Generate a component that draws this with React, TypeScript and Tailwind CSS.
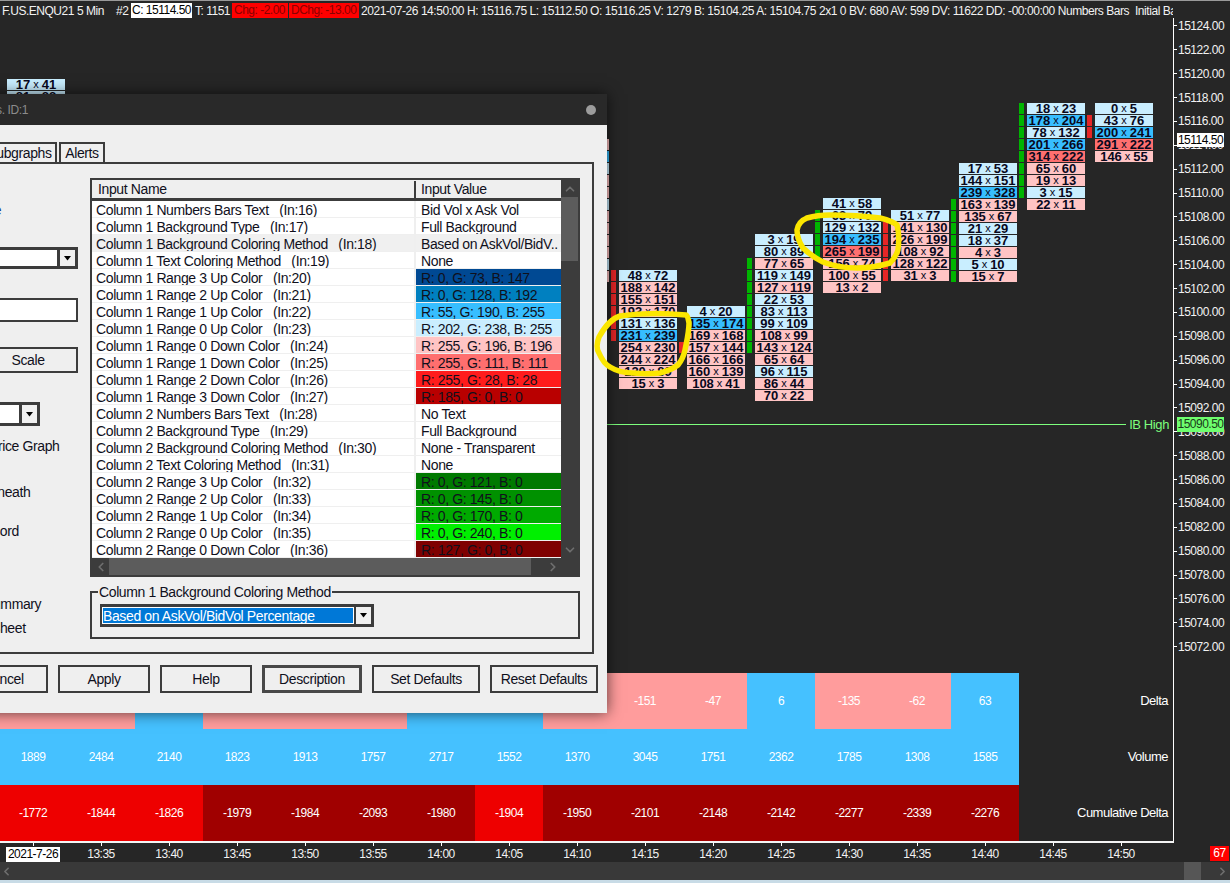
import React from "react";
import { ChevronDown, ChevronLeft, ChevronRight, ChevronUp } from "lucide-react";

type Shade = "L" | "B" | "P" | "R";
type Cell = [number | null, number | null, Shade];

type FootprintColumn = {
  x: number;
  top: number;
  bar?: { color: "green" | "red"; from: number; to: number };
  rows: Cell[];
};

const shadeClass: Record<Shade, string> = {
  L: "bg-[#c9eeff]",
  B: "bg-[#37beff]",
  P: "bg-[#ffc4c4]",
  R: "bg-[#ff6f6f]",
};

const blank = (s: Shade): Cell => [null, null, s];

const columns: FootprintColumn[] = [
  { x: 7, top: 79, rows: [[17, 41, "L"], [81, 88, "L"]] },
  {
    x: 551,
    top: 139,
    rows: [blank("P"), blank("B"), blank("L"), blank("P"), blank("P"), blank("L"), blank("P"), blank("P"), blank("P"), blank("P"), blank("L"), blank("P")],
  },
  {
    x: 619,
    top: 270,
    bar: { color: "red", from: 0, to: 5 },
    rows: [[48, 72, "L"], [188, 142, "P"], [155, 151, "P"], [193, 170, "P"], [131, 136, "L"], [231, 239, "B"], [254, 230, "P"], [244, 224, "P"], [120, 89, "P"], [15, 3, "P"]],
  },
  {
    x: 687,
    top: 306,
    bar: { color: "red", from: 3, to: 3 },
    rows: [[4, 20, "L"], [135, 174, "B"], [169, 168, "P"], [157, 144, "P"], [166, 166, "P"], [160, 139, "P"], [108, 41, "P"]],
  },
  {
    x: 755,
    top: 234,
    bar: { color: "green", from: 2, to: 9 },
    rows: [[3, 19, "L"], [80, 89, "L"], [77, 65, "P"], [119, 149, "L"], [127, 119, "P"], [22, 53, "L"], [83, 113, "L"], [99, 109, "L"], [108, 99, "P"], [143, 124, "P"], [65, 64, "P"], [96, 115, "L"], [86, 44, "P"], [70, 22, "P"]],
  },
  {
    x: 823,
    top: 198,
    bar: { color: "green", from: 1, to: 4 },
    rows: [[41, 58, "L"], [63, 79, "L"], [129, 132, "L"], [194, 235, "B"], [265, 199, "R"], [156, 74, "P"], [100, 55, "P"], [13, 2, "P"]],
  },
  {
    x: 891,
    top: 210,
    bar: { color: "red", from: 1, to: 5 },
    rows: [[51, 77, "L"], [141, 130, "P"], [226, 199, "P"], [108, 92, "P"], [128, 122, "P"], [31, 3, "P"]],
  },
  {
    x: 959,
    top: 163,
    bar: { color: "green", from: 3, to: 9 },
    rows: [[17, 53, "L"], [144, 151, "L"], [239, 328, "B"], [163, 139, "P"], [135, 67, "P"], [21, 29, "L"], [18, 37, "L"], [4, 3, "P"], [5, 10, "L"], [15, 7, "P"]],
  },
  {
    x: 1027,
    top: 103,
    bar: { color: "green", from: 0, to: 7 },
    rows: [[18, 23, "L"], [178, 204, "B"], [78, 132, "L"], [201, 266, "B"], [314, 222, "R"], [65, 60, "P"], [19, 13, "P"], [3, 15, "L"], [22, 11, "P"]],
  },
  {
    x: 1095,
    top: 103,
    bar: { color: "red", from: 1, to: 2 },
    rows: [[0, 5, "L"], [43, 76, "L"], [200, 241, "B"], [291, 222, "R"], [146, 55, "P"]],
  },
];

const deltaRow: [string, boolean][] = [
  ["-70", false], ["-72", false], ["18", true], ["-153", false], ["-5", false], ["-109", false], ["113", true], ["76", true],
  ["-46", false], ["-151", false], ["-47", false], ["6", true], ["-135", false], ["-62", false], ["63", true],
];
const volumeRow = ["1889", "2484", "2140", "1823", "1913", "1757", "2717", "1552", "1370", "3045", "1751", "2362", "1785", "1308", "1585"];
const cumRow: [string, boolean][] = [
  ["-1772", true], ["-1844", true], ["-1826", true], ["-1979", false], ["-1984", false], ["-2093", false], ["-1980", false], ["-1904", true],
  ["-1950", false], ["-2101", false], ["-2148", false], ["-2142", false], ["-2277", false], ["-2339", false], ["-2276", false],
];

const times = ["2021-7-26", "13:35", "13:40", "13:45", "13:50", "13:55", "14:00", "14:05", "14:10", "14:15", "14:20", "14:25", "14:30", "14:35", "14:40", "14:45", "14:50"];
const prices = Array.from({ length: 27 }, (_, i) => (15124 - i * 2).toFixed(2));

const inputs: [string, string, string, string?][] = [
  ["Column 1 Numbers Bars Text", "16", "Bid Vol x Ask Vol"],
  ["Column 1 Background Type", "17", "Full Background"],
  ["Column 1 Background Coloring Method", "18", "Based on AskVol/BidV.."],
  ["Column 1 Text Coloring Method", "19", "None"],
  ["Column 1 Range 3 Up Color", "20", "R: 0, G: 73, B: 147", "bg-[#004993]"],
  ["Column 1 Range 2 Up Color", "21", "R: 0, G: 128, B: 192", "bg-[#0080c0]"],
  ["Column 1 Range 1 Up Color", "22", "R: 55, G: 190, B: 255", "bg-[#37beff]"],
  ["Column 1 Range 0 Up Color", "23", "R: 202, G: 238, B: 255", "bg-[#caeeff]"],
  ["Column 1 Range 0 Down Color", "24", "R: 255, G: 196, B: 196", "bg-[#ffc4c4]"],
  ["Column 1 Range 1 Down Color", "25", "R: 255, G: 111, B: 111", "bg-[#ff6f6f]"],
  ["Column 1 Range 2 Down Color", "26", "R: 255, G: 28, B: 28", "bg-[#ff1c1c]"],
  ["Column 1 Range 3 Down Color", "27", "R: 185, G: 0, B: 0", "bg-[#b90000]"],
  ["Column 2 Numbers Bars Text", "28", "No Text"],
  ["Column 2 Background Type", "29", "Full Background"],
  ["Column 2 Background Coloring Method", "30", "None - Transparent"],
  ["Column 2 Text Coloring Method", "31", "None"],
  ["Column 2 Range 3 Up Color", "32", "R: 0, G: 121, B: 0", "bg-[#007900]"],
  ["Column 2 Range 2 Up Color", "33", "R: 0, G: 145, B: 0", "bg-[#009100]"],
  ["Column 2 Range 1 Up Color", "34", "R: 0, G: 170, B: 0", "bg-[#00aa00]"],
  ["Column 2 Range 0 Up Color", "35", "R: 0, G: 240, B: 0", "bg-[#00f000]"],
  ["Column 2 Range 0 Down Color", "36", "R: 127, G: 0, B: 0", "bg-[#7f0000]"],
];

const DropArrow = () => (
  <div className="w-[15px] flex-none self-stretch bg-[#f0f0f0] flex items-center justify-center">
    <svg width="9" height="5" viewBox="0 0 9 5">
      <polygon points="1,0 8,0 4.5,4.5" fill="#000" />
    </svg>
  </div>
);

const Footprint = ({ col }: { col: FootprintColumn }) => (
  <div className="absolute flex flex-col" style={{ left: col.x - 8, top: col.top }}>
    {col.rows.map((row, i) => {
      const hasBar = col.bar && i >= col.bar.from && i <= col.bar.to;
      return (
        <div key={i} className="flex gap-[3px] h-[11px] mb-px">
          <div className={`w-[5px] ${hasBar ? (col.bar?.color === "green" ? "bg-[#00b400]" : "bg-[#e62626]") : ""}`} />
          <div className={`w-[58px] h-[11px] overflow-hidden flex items-center justify-center whitespace-nowrap font-bold text-[13px] tracking-normal leading-[11px] text-[#08081c] ${shadeClass[row[2]]}`}>
            {row[0] !== null && (
              <>
                <span>{row[0]}</span>
                <span className="text-[11px] font-normal mx-[3px]">x</span>
                <span>{row[1]}</span>
              </>
            )}
          </div>
        </div>
      );
    })}
  </div>
);

const DialogButton = ({ label, width, active }: { label: string; width: string; active?: boolean }) => (
  <div className={`${width} h-[28px] flex items-center justify-center ${active ? "border-[3px] border-[#484848]" : "border-2 border-[#3c3c3c]"}`}>
    {label}
  </div>
);

const SettingsDialog = () => (
  <div className="absolute left-[-100px] top-[94px] w-[707px] h-[619px] flex flex-col z-10 shadow-[0_0_14px_rgba(0,0,0,0.65)] font-['Liberation_Sans',sans-serif] text-[14px] tracking-[-0.38px] text-[#10101c]">
    <div className="h-[31px] flex-none bg-[#292929] flex items-center justify-between pr-[11px]">
      <span className="w-[128px] text-right text-[12px] tracking-[-0.4px] text-[#8c8c8c] whitespace-nowrap">Numbers Bars. ID:1</span>
      <div className="w-[10px] h-[10px] rounded-full bg-[#9c9c9c]" />
    </div>
    <div className="flex-1 bg-[#efefef] pt-[17px]">
      <div className="flex gap-[2px] pl-[82px] h-[20px]">
        <div className="w-[75px] border-2 border-b-0 border-[#3c3c3c] flex items-center justify-center">Subgraphs</div>
        <div className="w-[46px] border-2 border-b-0 border-[#3c3c3c] flex items-center justify-center">Alerts</div>
      </div>
      <div className="ml-[10px] w-[684px] h-[492px] border-2 border-[#3c3c3c] flex">
        <div className="w-[178px] flex-none flex flex-col">
          <div className="h-[18px] mt-[36px] ml-[60px] text-[#1a3a8a]">Style</div>
          <div className="w-[166px] h-[22px] mt-[29px] border-[3px] border-[#3c3c3c] bg-white flex justify-end">
            <div className="w-[3px] bg-[#3c3c3c]" />
            <DropArrow />
          </div>
          <div className="w-[166px] h-[24px] mt-[29px] border-2 border-[#3c3c3c] bg-white" />
          <div className="w-[100px] h-[26px] mt-[25px] ml-[66px] border-2 border-[#3c3c3c] flex items-center justify-center">Scale</div>
          <div className="w-[128px] h-[24px] mt-[29px] border-[3px] border-[#3c3c3c] bg-white flex justify-end">
            <div className="w-[3px] bg-[#3c3c3c]" />
            <DropArrow />
          </div>
          <div className="h-[18px] mt-[10px] ml-[77px] whitespace-nowrap">Price Graph</div>
          <div className="h-[18px] mt-[28px] ml-[49px] whitespace-nowrap">Underneath</div>
          <div className="h-[18px] mt-[21px] ml-[64px] whitespace-nowrap">Record</div>
          <div className="h-[18px] mt-[55px] ml-[72px] whitespace-nowrap">Summary</div>
          <div className="h-[18px] mt-[6px] ml-[79px] whitespace-nowrap">Sheet</div>
        </div>
        <div className="w-[490px] flex-none pt-[14px]">
          <div className="h-[399px] border-2 border-[#3c3c3c] flex flex-col">
            <div className="flex flex-1 min-h-0">
              <div className="w-[469px] flex-none bg-white flex flex-col">
                <div className="h-[21px] flex-none flex items-center pt-px bg-[#efefef] border-b-[3px] border-[#3c3c3c]">
                  <div className="w-[322px] pl-[6px]">Input Name</div>
                  <div className="w-[2px] h-full bg-[#3c3c3c]" />
                  <div className="pl-[5px]">Input Value</div>
                </div>
                {inputs.map(([name, id, value, color], i) => (
                  <div key={id} className={`flex h-[17px] flex-none border-b border-[#efefef] ${i === 2 ? "bg-[#f0f0f0]" : ""}`}>
                    <div className="w-[322px] pl-[4px] whitespace-pre overflow-hidden leading-[18px]">{name + "   (In:" + id + ")"}</div>
                    <div className="w-[2px] bg-[#efefef]" />
                    <div className={`flex-1 pl-[5px] whitespace-nowrap overflow-hidden leading-[18px] ${color ?? ""}`}>{value}</div>
                  </div>
                ))}
              </div>
              <div className="flex-1 bg-[#3c3c3c] flex flex-col items-center text-[#6e6e6e]">
                <div className="h-[17px] flex items-center"><ChevronUp size={14} strokeWidth={3} /></div>
                <div className="w-full h-[64px] bg-[#5c5c5c]" />
                <div className="flex-1" />
                <div className="h-[17px] flex items-center"><ChevronDown size={14} strokeWidth={3} /></div>
              </div>
            </div>
            <div className="h-[17px] flex-none bg-[#3c3c3c] flex text-[#6e6e6e]">
              <div className="w-[17px] flex items-center justify-center"><ChevronLeft size={14} strokeWidth={3} /></div>
              <div className="w-[422px] bg-[#5c5c5c]" />
              <div className="w-[30px] flex items-center justify-end pr-[1px]"><ChevronRight size={14} strokeWidth={3} /></div>
            </div>
          </div>
          <fieldset className="mt-[6px] h-[56px] border-2 border-[#3c3c3c]">
            <legend className="ml-[6px] px-px h-[18px] leading-[18px]">Column 1 Background Coloring Method</legend>
            <div className="ml-[8px] mt-[3px] w-[274px] h-[23px] border-y-[3px] border-r-[3px] border-l-2 border-[#3c3c3c] flex">
              <div className="flex-1 bg-[#0078d7] border border-white text-white leading-[16px] whitespace-nowrap overflow-hidden">Based on AskVol/BidVol Percentage</div>
              <div className="w-[2px] bg-[#3c3c3c]" />
              <DropArrow />
            </div>
          </fieldset>
        </div>
      </div>
      <div className="flex gap-[10px] ml-[58px] mt-[11px]">
        <DialogButton label="Cancel" width="w-[90px]" />
        <DialogButton label="Apply" width="w-[92px]" />
        <DialogButton label="Help" width="w-[92px]" />
        <DialogButton label="Description" width="w-[100px]" active />
        <DialogButton label="Set Defaults" width="w-[108px]" />
        <DialogButton label="Reset Defaults" width="w-[108px]" />
      </div>
    </div>
  </div>
);

export default function App() {
  return (
    <div className="relative w-[1230px] h-[883px] overflow-hidden bg-[#262626] flex flex-col font-['Liberation_Sans',sans-serif] text-[12px] tracking-[-0.5px] text-white">
      <div className="h-px flex-none bg-[#9a9a9a]" />

      <div className="flex h-[842px] flex-none">
        {/* chart side */}
        <div className="w-[1174px] flex-none flex flex-col border-b-2 border-[#f4f4f4]">
          <div className="mt-[2px] h-[15px] flex-none pl-[2px] flex items-center whitespace-nowrap overflow-hidden w-[1173px] text-[#f2f2f2]">
            <span className="w-[75px] flex-none">F.US.ENQU21</span>
            <span className="w-[39px] flex-none">5 Min</span>
            <span className="w-[15px] flex-none">#2</span>
            <span className="h-full px-[1px] w-[61px] flex-none bg-white text-black leading-[15px]">C: 15114.50</span>
            <span className="ml-[3px] w-[37px] flex-none">T: 1151</span>
            <span className="h-full w-[56px] flex-none px-[2px] bg-[#ff0000] text-[#8a0000] leading-[15px]">Chg: -2.00</span>
            <span className="ml-[1px] h-full w-[70px] flex-none px-[2px] bg-[#ff0000] text-[#8a0000] leading-[15px]">DChg: -13.00</span>
            <span className="ml-[2px] whitespace-pre tracking-[-0.44px]">2021-07-26 14:50:00 H: 15116.75 L: 15112.50 O: 15116.25 V: 1279 B: 15104.25 A: 15104.75 2x1 0 BV: 680 AV: 599 DV: 11622 DD: -00:00:00 Numbers Bars  Initial Balance</span>
          </div>
          <div className="flex-1 border-r border-white" />
          <div className="h-[56px] flex-none flex items-center -ml-px border-r border-white">
            {deltaRow.map(([v, up], i) => (
              <div key={i} className={`w-[68px] h-full flex items-center justify-center ${up ? "bg-[#45c1ff]" : "bg-[#ff9c9c]"}`}>{v}</div>
            ))}
            <div className="flex-1 text-right pr-[5px] text-[13px] tracking-[-0.5px]">Delta</div>
          </div>
          <div className="h-[56px] flex-none flex items-center -ml-px border-r border-white">
            {volumeRow.map((v, i) => (
              <div key={i} className="w-[68px] h-full flex items-center justify-center bg-[#45c1ff]">{v}</div>
            ))}
            <div className="flex-1 text-right pr-[5px] text-[13px] tracking-[-0.5px]">Volume</div>
          </div>
          <div className="h-[56px] flex-none flex items-center -ml-px border-r border-white">
            {cumRow.map(([v, bright], i) => (
              <div key={i} className={`w-[68px] h-full flex items-center justify-center ${bright ? "bg-[#ee0000]" : "bg-[#a00000]"}`}>{v}</div>
            ))}
            <div className="flex-1 text-right pr-[5px] text-[13px] tracking-[-0.5px] whitespace-nowrap">Cumulative Delta</div>
          </div>
        </div>

        {/* price axis */}
        <div className="flex-1 flex flex-col pt-[13px]">
          {prices.map((p) => (
            <div key={p} className="h-[23.88px] flex-none flex items-center text-[#f2f2f2]">
              <div className="w-[3px] h-px bg-white" />
              <span className="ml-[1px]">{p}</span>
            </div>
          ))}
        </div>
      </div>

      {/* time axis */}
      <div className="relative h-[19px] flex-none flex -ml-px">
        {times.map((t, i) => (
          <div key={t} className="w-[68px] flex-none flex flex-col items-center">
            <div className="w-px h-[3px] bg-white" />
            <span className={`mt-px h-[15px] leading-[15px] text-center ${i === 0 ? "w-[54px] bg-white text-black" : "text-[#f2f2f2]"}`}>{t}</span>
          </div>
        ))}
        <div className="absolute right-[1px] top-[3px] w-[19px] h-[15px] bg-[#ff0000] text-center leading-[15px]">67</div>
      </div>

      {/* bottom scrollbar */}
      <div className="h-[18px] flex-none bg-[#393939] flex items-center text-[#6e6e6e]">
        <ChevronLeft size={13} strokeWidth={3} />
        <div className="ml-auto w-[17px] h-full bg-[#565656]" />
        <div className="w-[29px] flex justify-end pr-[1px]"><ChevronRight size={13} strokeWidth={3} /></div>
      </div>
      <div className="flex-1 bg-[#c8dbe6]" />

      {/* footprint columns on the chart */}
      {columns.map((col) => (
        <Footprint key={col.x} col={col} />
      ))}

      {/* IB High line */}
      <div className="absolute left-[600px] top-[417px] w-[573px] h-[15px] flex items-center text-[#7dff7d] text-[13px] tracking-[-0.4px]">
        <div className="flex-1 h-px bg-[#7dff7d]" />
        <span className="ml-[3px] pr-[4px]">IB High</span>
      </div>

      {/* price tags */}
      <div className="absolute left-[1177px] top-[133px] w-[47px] h-[14px] bg-white text-black text-center leading-[14px]">15114.50</div>
      <div className="absolute left-[1177px] top-[417px] w-[47px] h-[15px] bg-[#6efe6e] text-[#1a3a1a] text-center leading-[15px]">15090.50</div>

      <SettingsDialog />

      {/* hand drawn highlight rings */}
      <svg className="absolute inset-0 z-20 pointer-events-none" width="1230" height="883" fill="none" stroke="#fbe600" strokeWidth="5.5" strokeLinecap="round" strokeLinejoin="round">
        <path d="M689 323 C688 318 688 316 686 315 C665 313 640 313 620 316 C610 319 604 328 599 337 C596 345 597 350 599 353 C602 360 606 365 610 367 C618 372 625 373 633 373 C642 374 652 374 660 373 C668 371 674 368 678 365 C682 360 684 355 685 350 C687 340 689 332 689 323" />
        <path d="M807 218 C814 216 822 215 830 215 C848 215 865 216 880 218 C888 220 894 222 897 225 C899 232 899 242 898 250 C896 256 893 260 890 263 C880 266 868 268 857 268 C845 268 833 266 823 262 C815 258 808 253 803 248 C799 242 797 236 797 230 C798 224 802 220 807 218" />
      </svg>
    </div>
  );
}
